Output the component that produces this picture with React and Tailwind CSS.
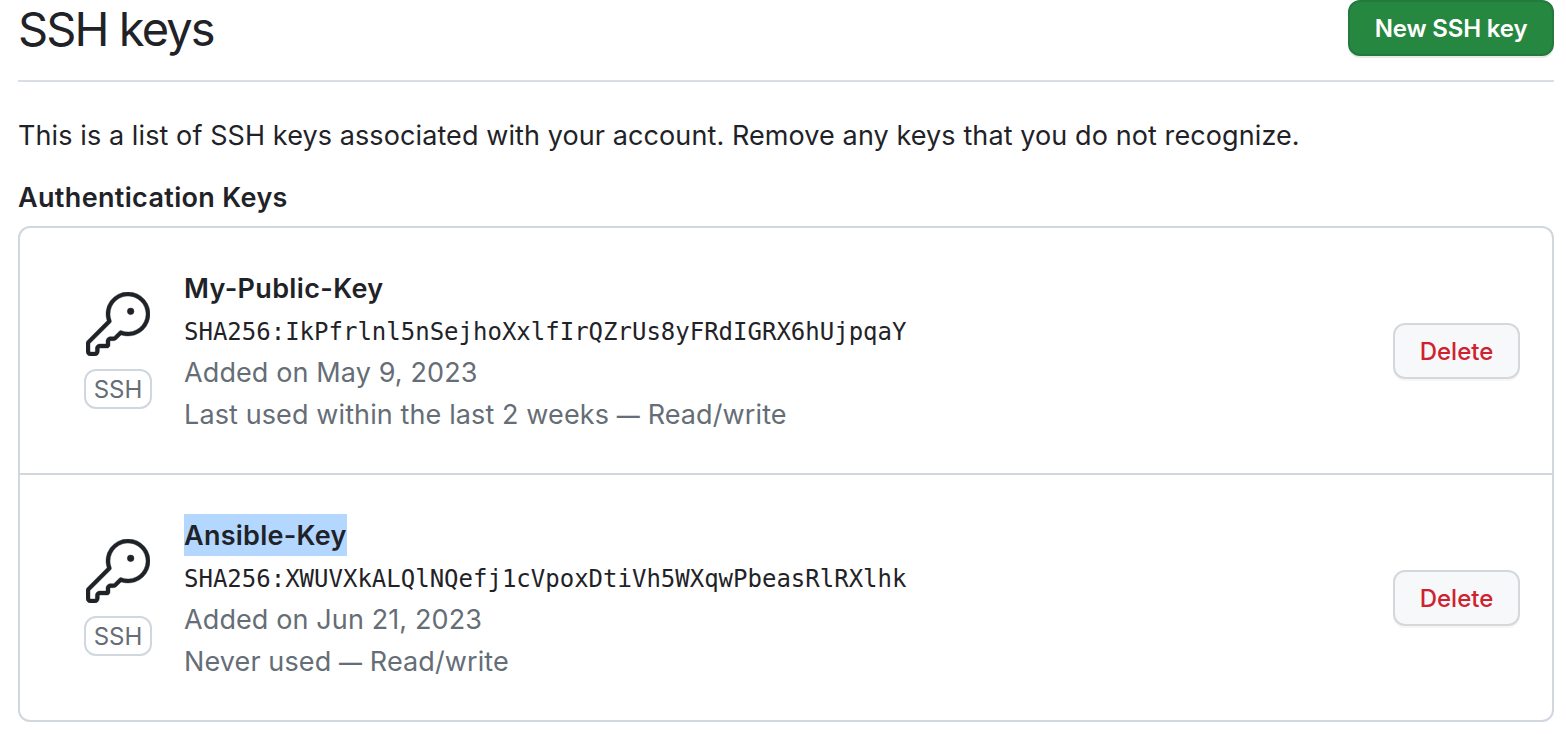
import React from "react";

const keys = [
  { name: "My-Public-Key", hash: "SHA256:IkPfrlnl5nSejhoXxlfIrQZrUs8yFRdIGRX6hUjpqaY", added: "Added on May 9, 2023", used: "Last used within the last 2 weeks", access: "Read/write" },
  { name: "Ansible-Key", hash: "SHA256:XWUVXkALQlNQefj1cVpoxDtiVh5WXqwPbeasRlRXlhk", added: "Added on Jun 21, 2023", used: "Never used", access: "Read/write", selected: true },
];

function KeyIcon() {
  return (
    <svg viewBox="0 0 24 24" className="size-16 fill-[#1f2328] stroke-[#1f2328] stroke-[0.15]" aria-hidden="true">
      <path d="M16.75 8.5a1.25 1.25 0 1 0 0-2.5 1.25 1.25 0 0 0 0 2.5Z" />
      <path d="M15.75 0a8.25 8.25 0 1 1-2.541 16.101l-1.636 1.636a1.744 1.744 0 0 1-1.237.513H9.25a.25.25 0 0 0-.25.25v1.448a.876.876 0 0 1-.256.619l-.214.213a.75.75 0 0 1-.545.22H5.25a.25.25 0 0 0-.25.25v1A1.75 1.75 0 0 1 3.25 24h-1.5A1.75 1.75 0 0 1 0 22.25v-2.836c0-.464.185-.908.513-1.236l7.386-7.388A8.249 8.249 0 0 1 15.75 0ZM9 8.25a6.733 6.733 0 0 0 .463 2.462.75.75 0 0 1-.168.804l-7.722 7.721a.25.25 0 0 0-.073.177v2.836c0 .138.112.25.25.25h1.5a.25.25 0 0 0 .25-.25v-1c0-.966.784-1.75 1.75-1.75H7.5v-1c0-.966.784-1.75 1.75-1.75h1.086a.25.25 0 0 0 .177-.073l1.971-1.972a.75.75 0 0 1 .804-.168A6.75 6.75 0 1 0 9 8.25Z" />
    </svg>
  );
}

export default function App() {
  return (
    <main className="h-[734px] overflow-hidden bg-white pl-[18px] pr-3 font-[Inter,sans-serif] text-[27px] leading-[42px] text-[#1f2328]">
      <header className="flex h-[82px] items-start justify-between border-b-2 border-[#d8dee4]">
        <h1 className="text-[47px] leading-[57px] tracking-[-1.9px] font-[430]">SSH keys</h1>
        <button className="h-14 w-[206px] rounded-xl border-2 border-[#247a3c] bg-[#268740] pt-0.5 text-2xl leading-none font-semibold tracking-[-0.15px] text-white shadow-[0_2px_0_rgba(31,35,40,0.1)]">New SSH key</button>
      </header>
      <p className="mt-[33px] whitespace-nowrap tracking-[0.095px]">This is a list of SSH keys associated with your account. Remove any keys that you do not recognize.</p>
      <h2 className="mt-5 font-semibold tracking-[0.34px]">Authentication Keys</h2>
      <ul className="mt-[7px] h-[496px] rounded-xl border-2 border-[#d0d7de]">
        {keys.map((k) => (
          <li key={k.name} className="flex h-[247px] items-center border-[#d0d7de] pr-8 pl-16 last:h-[245px] first:border-b-2">
            <div className="flex w-[68px] flex-col items-center gap-[13px]">
              <KeyIcon />
              <span className="flex h-10 w-[68px] items-center justify-center rounded-xl border-2 border-[#d0d7de] pt-0.5 text-2xl text-[#656d76]">SSH</span>
            </div>
            <div className="ml-8 flex-1 whitespace-nowrap text-[#656d76]">
              <div className={k.selected ? "flex h-[42px] items-start font-semibold tracking-[0.26px] text-[#1f2328]" : "flex h-[42px] items-start font-semibold tracking-[0.34px] text-[#1f2328]"}>
                <span className={k.selected ? "h-[42px] bg-[#b3d7ff] leading-[44px]" : "leading-[44px]"}>{k.name}</span>
              </div>
              <code className="block h-[42px] font-['DejaVu_Sans_Mono',monospace] text-2xl leading-[46px] text-[#1f2328]">{k.hash}</code>
              <div className="h-[42px] leading-[44px] tracking-[0.11px]">{k.added}</div>
              <div className="h-[42px] leading-[44px] tracking-[0.11px]">
                {k.used} <span className="text-[23px] font-medium">—</span> {k.access}
              </div>
            </div>
            <button className="h-14 w-[127px] rounded-xl border-2 border-[#d5d8da] bg-[#f6f8fa] pt-0.5 text-2xl leading-none font-medium text-[#cf222e] shadow-[0_2px_0_rgba(31,35,40,0.04)]">Delete</button>
          </li>
        ))}
      </ul>
    </main>
  );
}
